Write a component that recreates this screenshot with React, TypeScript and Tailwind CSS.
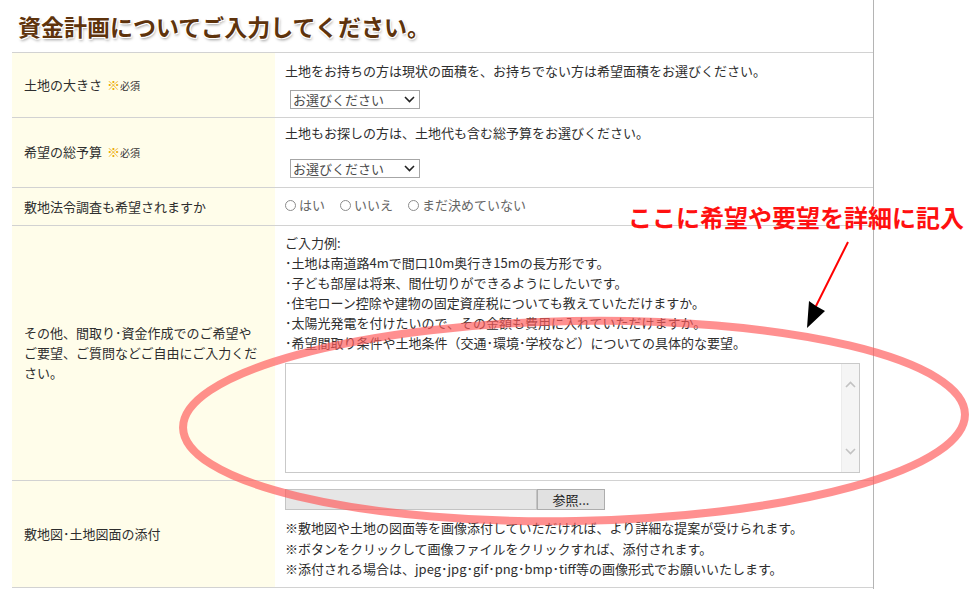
import { ReactNode } from 'react'

// ─── Small parts ──────────────────────────────────────────────────────────────

function Required() {
  return (
    <span className="ml-[5px]">
      <span className="text-[13px] text-[#eba900]">※</span>
      <span className="text-[10px] text-[#333]">必須</span>
    </span>
  )
}

function FakeSelect() {
  return (
    <div className="flex items-center justify-between w-[130px] h-[19px] border border-[#a6a6a6] bg-white pl-[2px] pr-[4px]">
      <span className="text-[13px] leading-[17px] text-[#4a4a4a]">お選びください</span>
      <svg width="11" height="7" viewBox="0 0 11 7" className="text-[#222]">
        <polyline points="1,1 5.5,5.5 10,1" fill="none" stroke="currentColor" strokeWidth="1.6" />
      </svg>
    </div>
  )
}

function Radio({ label }: { label: string }) {
  return (
    <span className="flex items-center gap-[3px] mr-[15px]">
      <span className="w-[11px] h-[11px] rounded-full border border-[#8c8c8c] bg-white" />
      <span className="text-[#666]">{label}</span>
    </span>
  )
}

function Row({ label, children, last }: { label: ReactNode; children: ReactNode; last?: boolean }) {
  return (
    <div className={'grid grid-cols-[263px_1fr] border-t border-[#d2d2d2]' + (last ? ' border-b' : '')}>
      <div className="flex items-center bg-[#fffdea] pl-[12px] pr-[12px]">{label}</div>
      <div className="pl-[10px] pr-[12px]">{children}</div>
    </div>
  )
}

// ─── Page ─────────────────────────────────────────────────────────────────────

export default function App() {
  return (
    <div className="relative w-[971px] h-[589px] overflow-hidden bg-white text-[13px] leading-5 text-[#2e2e2e] font-['Noto_Sans_CJK_JP','Noto_Sans',sans-serif]">
      <div className="w-[874px] h-full border-r border-[#b4b4b4] pl-[12px]">
        {/* Title */}
        <div className="flex items-center h-[52px] pl-[6px]">
          <h1 className="text-[23px] leading-[28px] font-bold text-[#5e330c] [text-shadow:1px_1px_0_#fff,-1px_-1px_0_#fff,1px_-1px_0_#fff,-1px_1px_0_#fff,1px_2px_3px_rgba(0,0,0,0.4)]">
            資金計画についてご入力してください。
          </h1>
        </div>

        {/* Form table */}
        <Row label={<span>土地の大きさ<Required /></span>}>
          <div className="pt-[8px] pb-[8px]">
            <p>土地をお持ちの方は現状の面積を、お持ちでない方は希望面積をお選びください。</p>
            <div className="mt-[9px] ml-[5px]">
              <FakeSelect />
            </div>
          </div>
        </Row>

        <Row label={<span>希望の総予算<Required /></span>}>
          <div className="pt-[5px] pb-[9px]">
            <p>土地もお探しの方は、土地代も含む総予算をお選びください。</p>
            <div className="mt-[16px] ml-[5px]">
              <FakeSelect />
            </div>
          </div>
        </Row>

        <Row label={<span>敷地法令調査も希望されますか</span>}>
          <div className="flex items-center pt-[7px] pb-[10px]">
            <Radio label="はい" />
            <Radio label="いいえ" />
            <Radio label="まだ決めていない" />
          </div>
        </Row>

        <Row
          label={
            <span>
              その他、間取り･資金作成でのご希望や<br />
              ご要望、ご質問などご自由にご入力くだ<br />
              さい。
            </span>
          }
        >
          <div className="pt-[7px] pb-[7px]">
            <p>ご入力例:</p>
            <p>･土地は南道路4mで間口10m奥行き15mの長方形です。</p>
            <p>･子ども部屋は将来、間仕切りができるようにしたいです。</p>
            <p>･住宅ローン控除や建物の固定資産税についても教えていただけますか。</p>
            <p>･太陽光発電を付けたいので、その金額も費用に入れていただけますか。</p>
            <p>･希望間取り条件や土地条件（交通･環境･学校など）についての具体的な要望。</p>
            <div className="flex justify-end mt-[10px] w-[575px] h-[110px] border border-[#c9c9c9] bg-white">
              <div className="flex flex-col items-center justify-between w-[18px] h-full bg-[#f5f5f5] border-l border-[#ececec] pt-[17px] pb-[17px]">
                <svg width="11" height="7" viewBox="0 0 11 7">
                  <polyline points="1,6 5.5,1.5 10,6" fill="none" stroke="#c2c2c2" strokeWidth="1.6" />
                </svg>
                <svg width="11" height="7" viewBox="0 0 11 7">
                  <polyline points="1,1 5.5,5.5 10,1" fill="none" stroke="#c2c2c2" strokeWidth="1.6" />
                </svg>
              </div>
            </div>
          </div>
        </Row>

        <Row label={<span>敷地図･土地図面の添付</span>} last>
          <div className="pt-[8px] pb-[7px]">
            <div className="flex h-[21px]">
              <div className="w-[252px] h-full bg-[#e6e6e6] border border-[#c4c4c4]" />
              <div className="flex items-center justify-center w-[68px] h-full bg-[#e1e1e1] border border-[#adadad] text-[13px] text-[#222]">
                参照...
              </div>
            </div>
            <div className="mt-[8px] leading-[20.5px]">
              <p>※敷地図や土地の図面等を画像添付していただければ、より詳細な提案が受けられます。</p>
              <p>※ボタンをクリックして画像ファイルをクリックすれば、添付されます。</p>
              <p>※添付される場合は、jpeg･jpg･gif･png･bmp･tiff等の画像形式でお願いいたします。</p>
            </div>
          </div>
        </Row>
      </div>

      {/* Annotation overlay */}
      <div className="absolute left-[628px] top-[203px] text-[24px] leading-[28px] font-bold text-[#ff1010] whitespace-nowrap">
        ここに希望や要望を詳細に記入
      </div>
      <svg className="absolute left-0 top-0 pointer-events-none" width="971" height="589" viewBox="0 0 971 589">
        <ellipse
          cx="574"
          cy="421"
          rx="391"
          ry="100"
          transform="rotate(-1 574 421)"
          fill="none"
          stroke="#ff5c5c"
          strokeOpacity="0.68"
          strokeWidth="8"
        />
        <line x1="848" y1="242" x2="815" y2="308" stroke="#ff0000" strokeWidth="2" />
        <polygon points="807,328 809,301 816,306 825,311" fill="#000" />
      </svg>
    </div>
  )
}
